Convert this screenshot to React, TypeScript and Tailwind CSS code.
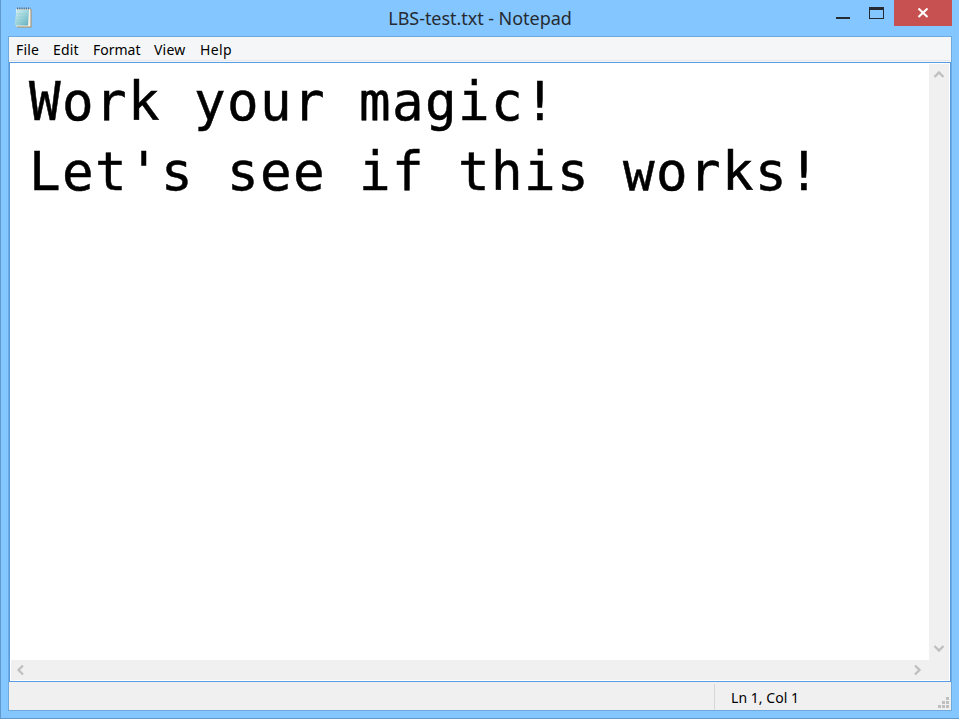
import React from "react";

const ui = "font-['Noto_Sans','Open_Sans',sans-serif]";

function NotepadIcon() {
  return (
    <svg width="20" height="22" viewBox="0 0 20 22">
      <defs>
        <linearGradient id="page" x1="0" y1="0" x2="1" y2="1">
          <stop offset="0" stopColor="#d3f0f2" />
          <stop offset="0.5" stopColor="#9fd5dc" />
          <stop offset="1" stopColor="#5cabbb" />
        </linearGradient>
      </defs>
      <path d="M3 2H18.5V20.5H4Z" fill="#a58b62" />
      <path d="M3 2H17.5V19.5H3Z" fill="#f5f3e8" />
      <path d="M3.5 2.5H16L15 18.5H1.5Z" fill="url(#page)" />
      <path d="M4 7H15M4 10H15M3.5 13H15M3 16H14.5" stroke="#8bc5ce" strokeWidth="0.5" />
      <path d="M4 1.5H17.5" stroke="#626f79" strokeWidth="2" strokeDasharray="1.2 1" />
    </svg>
  );
}

function Chevron({ d }: { d: string }) {
  return (
    <svg width="12" height="12" viewBox="0 0 12 12" fill="none" stroke="#bfbfbf" strokeWidth="2.3">
      <path d={d} />
    </svg>
  );
}

function TitleBar() {
  return (
    <header className="flex h-9 shrink-0 items-start">
      <div className="w-[244px] pl-3 pt-[7px]"><NotepadIcon /></div>
      <h1 className="w-[470px] pt-[6px] text-center text-[18px] leading-6 tracking-[-0.05px] text-[#252b31]">LBS-test.txt - Notepad</h1>
      <div className="flex w-[179px] justify-end pr-px">
        <svg width="60" height="26" viewBox="0 0 60 26" className="shrink-0">
          <path d="M3 17H17V19H3Z" fill="#252b31" />
          <path fillRule="evenodd" d="M36 7H51V19H36ZM37 10V18H50V10Z" fill="#252b31" />
        </svg>
      </div>
      <button className="flex h-[26px] w-[58px] justify-center bg-[#c75050] pr-px pt-[8px]">
        <svg width="12" height="10" viewBox="0 0 12 10" stroke="#fff" strokeWidth="2.1"><path d="M1.5 .5L10.5 9M10.5 .5L1.5 9" /></svg>
      </button>
    </header>
  );
}

function MenuBar() {
  return (
    <nav className="flex h-[23px] shrink-0 bg-[#f5f6f7] pl-[7px] text-[14px] leading-[25px] text-black">
      <span className="w-[37px] tracking-[0.2px]">File</span>
      <span className="w-[40px] tracking-[0.2px]">Edit</span>
      <span className="w-[61px]">Format</span>
      <span className="w-[46px] tracking-[0.2px]">View</span>
      <span className="tracking-[0.4px]">Help</span>
    </nav>
  );
}

export default function App() {
  return (
    <div className={`flex h-[719px] w-[959px] flex-col overflow-hidden border-b border-l border-[#6299cb] bg-[#84c6ff] ${ui}`}>
      <TitleBar />
      <main className="ml-[7px] flex h-[675px] w-[944px] flex-col border border-[#6fa9db] bg-[#f0f0f0]">
        <MenuBar />
        <div className="h-px shrink-0 bg-[#e8e8ec]" />
        <div className="h-px shrink-0 bg-[#f5f6f7]" />
        <section className="flex h-[620px] shrink-0 flex-col border border-[#569de5] bg-white p-px">
          <div className="flex h-[596px]">
            <pre className="w-[918px] pl-[18px] pt-[3px] font-['DejaVu_Sans_Mono',monospace] text-[52.5px] leading-[70px] tracking-[1.39px] text-black [-webkit-text-stroke:0.5px_black]">{"Work your magic!\nLet's see if this works!"}</pre>
            <div className="flex w-5 flex-col items-center justify-between bg-[#f0f0f0] pb-[6px] pr-px pt-[5px]">
              <Chevron d="M1.5 8L6 3.5L10.5 8" />
              <Chevron d="M1.5 4L6 8.5L10.5 4" />
            </div>
          </div>
          <div className="flex h-5 items-center justify-between bg-[#f0f0f0] pb-px pl-[4px] pr-[26px]">
            <Chevron d="M8 1.5L3.5 6L8 10.5" />
            <Chevron d="M4 1.5L8.5 6L4 10.5" />
          </div>
        </section>
        <footer className="flex h-7 shrink-0 items-end bg-[#f0f0f0]">
          <div className="ml-[705px] h-[26px] w-px bg-[#d7d7d7]" />
          <span className="h-[28px] w-[223px] pl-4 text-[14px] leading-[32px] tracking-[0.05px] text-black">Ln 1, Col 1</span>
          <svg width="12" height="12" viewBox="0 0 12 12" fill="#bfbfbf" className="mb-px">
            <path d="M8 0h3v3h-3zM4 4h3v3h-3zM8 4h3v3h-3zM0 8h3v3h-3zM4 8h3v3h-3zM8 8h3v3h-3z" />
          </svg>
        </footer>
      </main>
    </div>
  );
}
